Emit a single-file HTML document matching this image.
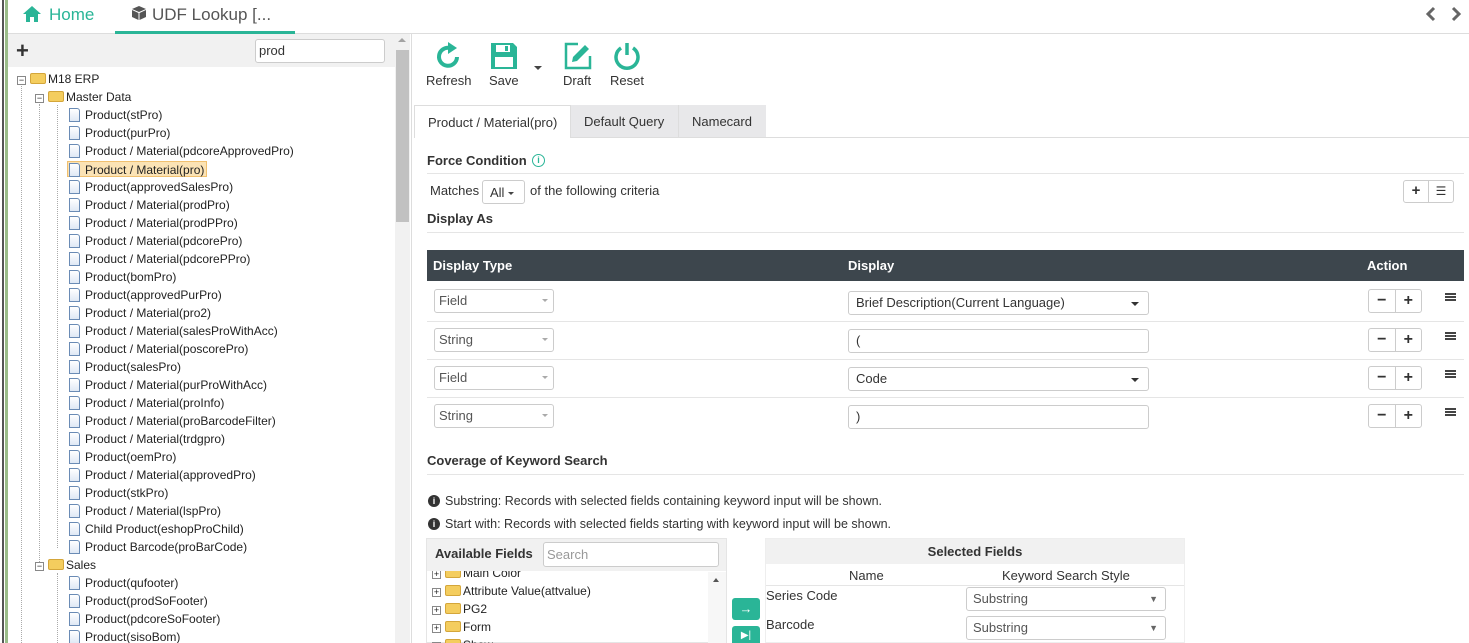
<!DOCTYPE html>
<html style="overflow:hidden;height:643px"><head><meta charset="utf-8"><style>
*{box-sizing:border-box;margin:0;padding:0}
body{width:1469px;height:643px;overflow:hidden;background:#fff;font-family:"Liberation Sans",Arial,sans-serif;color:#333;position:relative;font-size:13px}
.a{position:absolute}
.tree div{position:absolute;font-size:12px;color:#222;white-space:nowrap;height:16px;line-height:16px}
.fi{display:inline-block;width:11px;height:14px;border:1px solid #6a8bb5;background:linear-gradient(#fff,#dfe8f5);vertical-align:-3px;margin-right:5px;border-radius:0 3px 0 0}
.fo{display:inline-block;width:16px;height:11px;background:#f4cd5e;border:1px solid #d4a63a;vertical-align:-1px;margin-right:2px;border-radius:2px}
.mn{display:inline-block;width:9px;height:9px;border:1px solid #888;background:#fff;font-size:9px;line-height:6px;text-align:center;margin-right:4px;vertical-align:0}
.sel{border:1px solid #ccc;border-radius:3px;background:#fff;height:24px;font-size:13px;line-height:22px;padding-left:4px;color:#555}
.pm{border:1px solid #ccc;border-radius:3px;width:54px;height:24px;display:flex}
.pm span{flex:1;text-align:center;font-weight:bold;font-size:16px;line-height:21px;color:#333}
.pm span:first-child{border-right:1px solid #ccc}
.hr{position:absolute;height:1px;background:#e5e5e5}
</style></head><body>
<div class="a" style="left:2px;top:0;width:2px;height:643px;background:#555"></div>
<div class="a" style="left:5px;top:0;width:3px;height:643px;background:#9bbd8a"></div>
<div class="a" style="left:8px;top:33px;width:1461px;height:1px;background:#ddd"></div>
<svg class="a" style="left:22px;top:5px" width="20" height="18" viewBox="0 0 20 18"><path d="M10 1 L1 9 L4 9 L4 17 L8 17 L8 12 L12 12 L12 17 L16 17 L16 9 L19 9 Z" fill="#2ab597"/></svg>
<div class="a" style="left:49px;top:5px;font-size:17px;color:#2ab597">Home</div>
<svg class="a" style="left:131px;top:5px" width="16" height="16" viewBox="0 0 16 16"><path d="M8 1 L15 4 L8 7 L1 4Z" fill="#555"/><path d="M1 5 L7.5 8 L7.5 15 L1 12Z M15 5 L8.5 8 L8.5 15 L15 12Z" fill="#555"/></svg>
<div class="a" style="left:152px;top:5px;font-size:17px;color:#555">UDF Lookup [...</div>
<div class="a" style="left:115px;top:31px;width:180px;height:3px;background:#2ab597"></div>
<svg class="a" style="left:1424px;top:6px" width="40" height="16" viewBox="0 0 40 16"><path d="M10 2 L4 8 L10 14" stroke="#666" stroke-width="3" fill="none"/><path d="M29 2 L35 8 L29 14" stroke="#666" stroke-width="3" fill="none"/></svg>
<div class="a" style="left:8px;top:34px;width:387px;height:33px;background:#f1f1f1"></div>
<div class="a" style="left:16px;top:38px;font-size:22px;font-weight:bold;color:#333">+</div>
<div class="a" style="left:255px;top:39px;width:130px;height:24px;border:1px solid #ccc;border-radius:3px;background:#fff;padding:3px 3px;font-size:13px">prod</div>
<div class="a" style="left:395px;top:34px;width:15px;height:609px;background:#f1f1f1"></div>
<div class="a" style="left:396px;top:50px;width:13px;height:172px;background:#c1c1c1"></div>
<div class="a" style="left:398px;top:38px;width:0;height:0;border-left:4px solid transparent;border-right:4px solid transparent;border-bottom:4px solid #a3a3a3"></div>
<div class="a" style="left:411px;top:34px;width:1px;height:609px;background:#ddd"></div>
<div class="a" style="left:21px;top:86px;height:557px;border-left:1px dotted #aaa"></div>
<div class="a" style="left:39px;top:104px;height:460px;border-left:1px dotted #aaa"></div>
<div class="a" style="left:57px;top:105px;height:443px;border-left:1px dotted #aaa"></div>
<div class="a" style="left:57px;top:573px;height:70px;border-left:1px dotted #aaa"></div>
<div class="tree">
<div style="left:17px;top:71px"><span class="mn">−</span><span class="fo"></span>M18 ERP</div>
<div style="left:35px;top:89px"><span class="mn">−</span><span class="fo"></span>Master Data</div>
<div style="left:69px;top:107px"><span class="fi"></span>Product(stPro)</div>
<div style="left:69px;top:125px"><span class="fi"></span>Product(purPro)</div>
<div style="left:69px;top:143px"><span class="fi"></span>Product / Material(pdcoreApprovedPro)</div>
<div style="left:67px;top:161px;background:#fbe3b5;border:1px solid #f0c070;padding:0 2px 0 1px"><span class="fi"></span>Product / Material(pro)</div>
<div style="left:69px;top:179px"><span class="fi"></span>Product(approvedSalesPro)</div>
<div style="left:69px;top:197px"><span class="fi"></span>Product / Material(prodPro)</div>
<div style="left:69px;top:215px"><span class="fi"></span>Product / Material(prodPPro)</div>
<div style="left:69px;top:233px"><span class="fi"></span>Product / Material(pdcorePro)</div>
<div style="left:69px;top:251px"><span class="fi"></span>Product / Material(pdcorePPro)</div>
<div style="left:69px;top:269px"><span class="fi"></span>Product(bomPro)</div>
<div style="left:69px;top:287px"><span class="fi"></span>Product(approvedPurPro)</div>
<div style="left:69px;top:305px"><span class="fi"></span>Product / Material(pro2)</div>
<div style="left:69px;top:323px"><span class="fi"></span>Product / Material(salesProWithAcc)</div>
<div style="left:69px;top:341px"><span class="fi"></span>Product / Material(poscorePro)</div>
<div style="left:69px;top:359px"><span class="fi"></span>Product(salesPro)</div>
<div style="left:69px;top:377px"><span class="fi"></span>Product / Material(purProWithAcc)</div>
<div style="left:69px;top:395px"><span class="fi"></span>Product / Material(proInfo)</div>
<div style="left:69px;top:413px"><span class="fi"></span>Product / Material(proBarcodeFilter)</div>
<div style="left:69px;top:431px"><span class="fi"></span>Product / Material(trdgpro)</div>
<div style="left:69px;top:449px"><span class="fi"></span>Product(oemPro)</div>
<div style="left:69px;top:467px"><span class="fi"></span>Product / Material(approvedPro)</div>
<div style="left:69px;top:485px"><span class="fi"></span>Product(stkPro)</div>
<div style="left:69px;top:503px"><span class="fi"></span>Product / Material(lspPro)</div>
<div style="left:69px;top:521px"><span class="fi"></span>Child Product(eshopProChild)</div>
<div style="left:69px;top:539px"><span class="fi"></span>Product Barcode(proBarCode)</div>
<div style="left:35px;top:557px"><span class="mn">−</span><span class="fo"></span>Sales</div>
<div style="left:69px;top:575px"><span class="fi"></span>Product(qufooter)</div>
<div style="left:69px;top:593px"><span class="fi"></span>Product(prodSoFooter)</div>
<div style="left:69px;top:611px"><span class="fi"></span>Product(pdcoreSoFooter)</div>
<div style="left:69px;top:629px"><span class="fi"></span>Product(sisoBom)</div>
</div>
<svg class="a" style="left:436px;top:42px" width="26" height="28" viewBox="0 0 26 28"><path d="M21 15 A9 9 0 1 1 14 6" stroke="#2ab597" stroke-width="4" fill="none"/><path d="M12 0 L21 6 L12 12Z" fill="#2ab597"/></svg>
<div class="a" style="left:426px;top:73px;font-size:13px">Refresh</div>
<svg class="a" style="left:490px;top:42px" width="28" height="28" viewBox="0 0 28 28"><path d="M1 1 H23 L27 5 V27 H1Z" fill="#2ab597"/><rect x="6" y="3" width="14" height="7" fill="#fff"/><rect x="15" y="4" width="3" height="5" fill="#2ab597"/><rect x="5" y="15" width="18" height="10" fill="#fff"/></svg>
<div class="a" style="left:489px;top:73px;font-size:13px">Save</div>
<div class="a" style="left:534px;top:66px;border-left:4px solid transparent;border-right:4px solid transparent;border-top:4px solid #444"></div>
<svg class="a" style="left:564px;top:42px" width="28" height="28" viewBox="0 0 28 28"><path d="M14 2 H2 V26 H26 V14" stroke="#2ab597" stroke-width="2.5" fill="none"/><path d="M8 20 L9 15 L21 3 L25 7 L13 19Z" fill="#2ab597"/></svg>
<div class="a" style="left:563px;top:73px;font-size:13px">Draft</div>
<svg class="a" style="left:613px;top:42px" width="28" height="28" viewBox="0 0 28 28"><path d="M8 6 A11 11 0 1 0 20 6" stroke="#2ab597" stroke-width="3.5" fill="none"/><path d="M14 1 V13" stroke="#2ab597" stroke-width="3.5"/></svg>
<div class="a" style="left:610px;top:73px;font-size:13px">Reset</div>
<div class="a" style="left:414px;top:137px;width:1055px;height:1px;background:#ddd"></div>
<div class="a" style="left:414px;top:105px;width:157px;height:33px;border:1px solid #ddd;border-bottom:none;background:#fff;font-size:13px;padding:9px 0 0 13px">Product / Material(pro)</div>
<div class="a" style="left:571px;top:105px;width:107px;height:32px;background:#e8e8ea;font-size:13px;padding:9px 0 0 13px">Default Query</div>
<div class="a" style="left:678px;top:105px;width:88px;height:32px;background:#e8e8ea;border-left:1px solid #ddd;font-size:13px;padding:9px 0 0 13px">Namecard</div>
<div class="a" style="left:427px;top:153px;font-size:13px;font-weight:bold">Force Condition</div>
<div class="a" style="left:532px;top:154px;width:13px;height:13px;border:1px solid #2ab597;border-radius:50%;color:#2ab597;font-size:9px;text-align:center;line-height:11px;font-weight:bold">i</div>
<div class="hr" style="left:427px;top:173px;width:1037px"></div>
<div class="a" style="left:430px;top:183px;font-size:13px">Matches</div>
<div class="a" style="left:482px;top:180px;width:43px;height:24px;border:1px solid #ccc;border-radius:3px;font-size:13px;padding:4px 0 0 7px">All <span style="display:inline-block;border-left:3px solid transparent;border-right:3px solid transparent;border-top:3px solid #444;vertical-align:2px"></span></div>
<div class="a" style="left:530px;top:183px;font-size:13px">of the following criteria</div>
<div class="a" style="left:1403px;top:180px;width:51px;height:23px;border:1px solid #ccc;border-radius:3px;display:flex"><span style="flex:1;border-right:1px solid #ccc;text-align:center;font-weight:bold;font-size:15px;line-height:20px">+</span><span style="flex:1;text-align:center;font-size:12px;line-height:20px">&#x2630;</span></div>
<div class="a" style="left:427px;top:211px;font-size:13px;font-weight:bold">Display As</div>
<div class="hr" style="left:427px;top:232px;width:1037px"></div>
<div class="a" style="left:427px;top:250px;width:1037px;height:31px;background:#3d464d"></div>
<div class="a" style="left:433px;top:258px;font-size:13px;font-weight:bold;color:#fff">Display Type</div>
<div class="a" style="left:848px;top:258px;font-size:13px;font-weight:bold;color:#fff">Display</div>
<div class="a" style="left:1367px;top:258px;font-size:13px;font-weight:bold;color:#fff">Action</div>
<div class="hr" style="left:427px;top:321px;width:1037px"></div>
<div class="hr" style="left:427px;top:359px;width:1037px"></div>
<div class="hr" style="left:427px;top:397px;width:1037px"></div>
<div class="a sel" style="left:434px;top:289px;width:120px">Field</div>
<div class="a sel" style="left:848px;top:291px;width:301px;color:#333;padding-left:7px">Brief Description(Current Language)</div>
<div class="a sel" style="left:434px;top:328px;width:120px">String</div>
<div class="a sel" style="left:848px;top:329px;width:301px;color:#333;padding-left:7px">(</div>
<div class="a sel" style="left:434px;top:366px;width:120px">Field</div>
<div class="a sel" style="left:848px;top:367px;width:301px;color:#333;padding-left:7px">Code</div>
<div class="a sel" style="left:434px;top:404px;width:120px">String</div>
<div class="a sel" style="left:848px;top:405px;width:301px;color:#333;padding-left:7px">)</div>
<div class="a" style="left:542px;top:299px;border-left:3px solid transparent;border-right:3px solid transparent;border-top:3px solid #aaa"></div>
<div class="a" style="left:542px;top:338px;border-left:3px solid transparent;border-right:3px solid transparent;border-top:3px solid #aaa"></div>
<div class="a" style="left:542px;top:376px;border-left:3px solid transparent;border-right:3px solid transparent;border-top:3px solid #aaa"></div>
<div class="a" style="left:542px;top:414px;border-left:3px solid transparent;border-right:3px solid transparent;border-top:3px solid #aaa"></div>
<div class="a" style="left:1131px;top:302px;border-left:4px solid transparent;border-right:4px solid transparent;border-top:4px solid #333"></div>
<div class="a" style="left:1131px;top:378px;border-left:4px solid transparent;border-right:4px solid transparent;border-top:4px solid #333"></div>
<div class="a pm" style="left:1368px;top:289px"><span>−</span><span>+</span></div>
<div class="a pm" style="left:1368px;top:328px"><span>−</span><span>+</span></div>
<div class="a pm" style="left:1368px;top:366px"><span>−</span><span>+</span></div>
<div class="a pm" style="left:1368px;top:404px"><span>−</span><span>+</span></div>
<div class="a" style="left:1445px;top:293px;width:11px;height:8px;border-top:2px solid #444;border-bottom:2px solid #444"><div style="margin-top:1px;height:2px;background:#444"></div></div>
<div class="a" style="left:1445px;top:332px;width:11px;height:8px;border-top:2px solid #444;border-bottom:2px solid #444"><div style="margin-top:1px;height:2px;background:#444"></div></div>
<div class="a" style="left:1445px;top:370px;width:11px;height:8px;border-top:2px solid #444;border-bottom:2px solid #444"><div style="margin-top:1px;height:2px;background:#444"></div></div>
<div class="a" style="left:1445px;top:408px;width:11px;height:8px;border-top:2px solid #444;border-bottom:2px solid #444"><div style="margin-top:1px;height:2px;background:#444"></div></div>
<div class="a" style="left:427px;top:453px;font-size:13px;font-weight:bold">Coverage of Keyword Search</div>
<div class="hr" style="left:427px;top:474px;width:1037px"></div>
<div class="a" style="left:428px;top:495px;width:12px;height:12px;border-radius:50%;background:#333;color:#fff;font-size:9px;font-weight:bold;text-align:center;line-height:12px">i</div>
<div class="a" style="left:445px;top:494px;font-size:12.5px">Substring: Records with selected fields containing keyword input will be shown.</div>
<div class="a" style="left:428px;top:518px;width:12px;height:12px;border-radius:50%;background:#333;color:#fff;font-size:9px;font-weight:bold;text-align:center;line-height:12px">i</div>
<div class="a" style="left:445px;top:517px;font-size:12.5px">Start with: Records with selected fields starting with keyword input will be shown.</div>
<div class="a" style="left:426px;top:538px;width:301px;height:105px;border:1px solid #e5e5e5"></div>
<div class="a" style="left:427px;top:539px;width:299px;height:32px;background:#f1f1f1"></div>
<div class="a" style="left:435px;top:546px;font-size:13px;font-weight:bold">Available Fields</div>
<div class="a" style="left:543px;top:542px;width:176px;height:25px;border:1px solid #ccc;border-radius:3px;background:#fff;padding:4px 3px;font-size:13px;color:#999">Search</div>
<div class="a" style="left:708px;top:572px;width:18px;height:71px;background:#f7f7f7"></div>
<div class="a" style="left:713px;top:578px;border-left:3px solid transparent;border-right:3px solid transparent;border-bottom:4px solid #555"></div>
<div class="a tree" style="left:427px;top:571px;width:280px;height:72px;overflow:hidden">
<div style="left:5px;top:-6px"><span class="mn">+</span><span class="fo"></span>Main Color</div>
<div style="left:5px;top:12px"><span class="mn">+</span><span class="fo"></span>Attribute Value(attvalue)</div>
<div style="left:5px;top:30px"><span class="mn">+</span><span class="fo"></span>PG2</div>
<div style="left:5px;top:48px"><span class="mn">+</span><span class="fo"></span>Form</div>
<div style="left:5px;top:66px"><span class="mn">+</span><span class="fo"></span>Show</div>
</div>
<div class="a" style="left:732px;top:598px;width:28px;height:22px;background:#2ab597;border-radius:3px;color:#fff;text-align:center;font-weight:bold;line-height:21px">&#x2192;</div>
<div class="a" style="left:732px;top:626px;width:28px;height:22px;background:#2ab597;border-radius:3px;color:#fff;text-align:center;font-size:10px;line-height:20px">&#x25B6;|</div>
<div class="a" style="left:765px;top:538px;width:420px;height:105px;border:1px solid #eee"></div>
<div class="a" style="left:766px;top:539px;width:418px;height:25px;background:#f1f1f1;text-align:center;font-size:13px;font-weight:bold;line-height:25px">Selected Fields</div>
<div class="a" style="left:849px;top:568px;font-size:13px">Name</div>
<div class="a" style="left:1002px;top:568px;font-size:13px">Keyword Search Style</div>
<div class="hr" style="left:766px;top:585px;width:418px"></div>
<div class="a" style="left:766px;top:588px;font-size:13px">Series Code</div>
<div class="a" style="left:766px;top:617px;font-size:13px">Barcode</div>
<div class="a sel" style="left:966px;top:587px;width:200px;padding-left:6px">Substring<span style="position:absolute;right:7px;font-size:9px;color:#666">&#x25BC;</span></div>
<div class="a sel" style="left:966px;top:616px;width:200px;padding-left:6px">Substring<span style="position:absolute;right:7px;font-size:9px;color:#666">&#x25BC;</span></div>
</body></html>
